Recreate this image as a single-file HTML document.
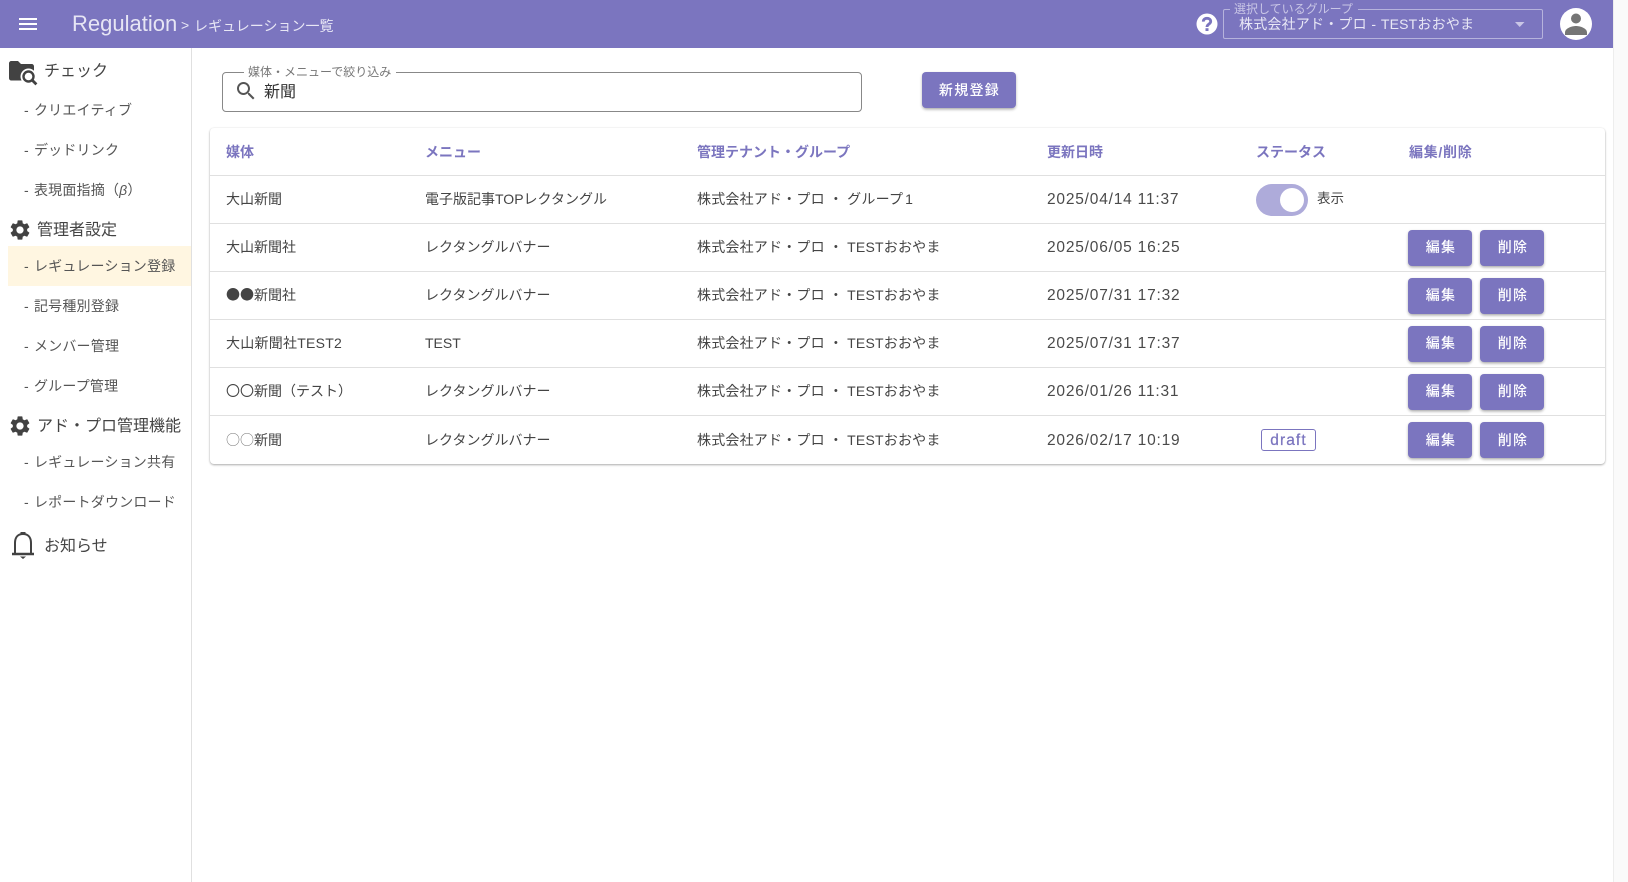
<!DOCTYPE html>
<html lang="ja">
<head>
<meta charset="utf-8">
<title>Regulation</title>
<style>
*{box-sizing:border-box}
html,body{margin:0;padding:0;width:1628px;height:882px;overflow:hidden;background:#fff}
body{position:relative;font-family:"Liberation Sans","Noto Sans CJK JP",sans-serif;color:#444;font-size:14px;text-spacing-trim:space-all}
.t{position:absolute;white-space:nowrap;line-height:20px;height:20px}
.abs{position:absolute}
svg{position:absolute;display:block}
#hdr{position:absolute;left:0;top:0;width:1613px;height:48px;background:#7b75bf}
#scroll{position:absolute;left:1613px;top:0;width:15px;height:882px;background:#fafafa;border-left:1px solid #ededed}
#side{position:absolute;left:191px;top:48px;width:1px;height:834px;background:#e0e0e0}
#hl{position:absolute;left:8px;top:246px;width:183px;height:40px;background:#fff6e1}
.h{font-size:16px;color:#444}
.s{font-size:14px;color:#555;letter-spacing:.2px;word-spacing:1px}
#card{position:absolute;left:210px;top:128px;width:1395px;height:336px;background:#fff;border-radius:4px;box-shadow:0 1px 2px rgba(0,0,0,.32),0 0 2px rgba(0,0,0,.05)}
.ln{position:absolute;left:210px;width:1395px;height:1px;background:#e0e0e0}
.th{font-size:14px;font-weight:bold;color:#7b75bf}
.td{font-size:14px;color:#444}
.g{letter-spacing:.2px}
.d{font-size:15.500px;letter-spacing:.8px;color:#4a4a4a}
.c{font-family:"Noto Sans CJK JP",sans-serif}
.btn{position:absolute;width:64px;height:36px;background:#7b75bf;color:#fff;border-radius:4px;text-align:center;line-height:35px;text-indent:2px;font-size:14px;font-weight:500;letter-spacing:1.3px;box-shadow:0 2px 3px -1px rgba(0,0,0,.3),0 1px 3px rgba(0,0,0,.14)}
</style>
</head>
<body>
<div id="hdr"></div>
<div id="scroll"></div>
<div id="side"></div>
<div id="hl"></div>

<svg style="left:16px;top:12px" width="24" height="24" viewBox="0 0 24 24"><path fill="#fff" d="M3 18h18v-2H3v2zm0-5h18v-2H3v2zm0-7v2h18V6H3z"/></svg>
<div class="t" style="left:72px;top:12px;height:24px;line-height:24px;font-size:22px;color:#e6e5f4">Regulation</div>
<div class="t" style="left:181px;top:15px;color:#e8e7f5;font-size:14px">&gt;</div>
<div class="t" style="left:194px;top:16px;color:#e8e7f5;font-size:14px">レギュレーション一覧</div>

<svg style="left:1196px;top:13px" width="22" height="22" viewBox="0 0 22 22"><circle cx="11" cy="11" r="10.500" fill="#fff"/><path fill="none" stroke="#7b75bf" stroke-width="2.800" d="M7.300 8.600C7.300 6.400 9 5.300 11 5.300s3.700 1.200 3.700 3.100c0 2.800-3.700 2.700-3.700 5.600"/><rect x="9.500" y="15.200" width="3" height="2.800" fill="#7b75bf"/></svg>
<div class="abs" style="left:1223px;top:9px;width:320px;height:30px;border:1px solid rgba(255,255,255,.45);border-radius:2px"></div>
<div class="abs" style="left:1230px;top:5px;width:128px;height:8px;background:#7b75bf"></div>
<div class="t" style="left:1234px;top:-1px;font-size:12px;color:#c9c6e6;line-height:20px">選択しているグループ</div>
<div class="t" style="left:1239px;top:14px;font-size:14px;color:#e8e7f5;letter-spacing:.2px;word-spacing:.5px">株式会社アド・プロ - TESTおおやま</div>
<svg style="left:1514px;top:22px" width="12" height="5" viewBox="0 0 12 5"><path fill="#c9c6e6" d="M1 0h9.500L5.700 5z"/></svg>
<svg style="left:1560px;top:8px" width="32" height="32" viewBox="0 0 32 32"><circle cx="16" cy="16" r="16" fill="#fff"/><circle cx="16" cy="10.500" r="5" fill="#757575"/><path fill="#757575" d="M5 24.500c0-4.300 7-6.500 11-6.500s11 2.200 11 6.500V27H5z"/></svg>

<!-- sidebar -->
<svg style="left:9px;top:60px" width="30" height="26" viewBox="0 0 30 26"><path fill="#424242" d="M0 3.500C0 2 1 1 2.500 1H9l3 3h10.500C24 4 25 5 25 6.500V18c0 1.500-1 2.500-2.500 2.500H2.500C1 20.500 0 19.500 0 18z"/><circle cx="19.500" cy="16.500" r="8" fill="#fff"/><circle cx="19.500" cy="16.500" r="5" fill="none" stroke="#424242" stroke-width="2.400"/><path stroke="#424242" stroke-width="2.800" d="M23 20L27.400 24.400"/></svg>
<div class="t h" style="left:44px;top:62px">チェック</div>
<div class="t s" style="left:24px;top:100px">- クリエイティブ</div>
<div class="t s" style="left:24px;top:140px">- デッドリンク</div>
<div class="t s" style="left:24px;top:180px">- 表現面指摘（<i>β</i>）</div>
<svg style="left:8px;top:218px" width="24" height="24" viewBox="0 0 24 24"><path fill="#424242" d="M19.140 12.940c.04-.3.06-.61.06-.94 0-.32-.02-.64-.07-.94l2.030-1.580c.18-.14.23-.41.12-.61l-1.920-3.320c-.12-.22-.37-.29-.59-.22l-2.390.96c-.5-.38-1.030-.7-1.620-.94l-.36-2.540c-.04-.24-.24-.41-.48-.41h-3.840c-.24 0-.43.17-.47.41l-.36 2.540c-.59.24-1.130.57-1.620.94l-2.390-.96c-.22-.08-.47 0-.59.22L2.740 8.870c-.12.21-.08.47.12.61l2.030 1.580c-.05.3-.09.63-.09.94s.02.64.07.94l-2.030 1.580c-.18.14-.23.41-.12.61l1.920 3.320c.12.22.37.29.59.22l2.390-.96c.5.38 1.030.7 1.620.94l.36 2.540c.05.24.24.41.48.41h3.840c.24 0 .44-.17.47-.41l.36-2.540c.59-.24 1.130-.56 1.620-.94l2.390.96c.22.08.47 0 .59-.22l1.920-3.320c.12-.22.07-.47-.12-.61l-2.010-1.580zM12 15.600c-1.980 0-3.600-1.620-3.600-3.600s1.620-3.600 3.600-3.600 3.600 1.620 3.600 3.600-1.620 3.600-3.600 3.600z"/></svg>
<div class="t h" style="left:37px;top:221px">管理者設定</div>
<div class="t s" style="left:24px;top:256px">- レギュレーション登録</div>
<div class="t s" style="left:24px;top:296px">- 記号種別登録</div>
<div class="t s" style="left:24px;top:336px">- メンバー管理</div>
<div class="t s" style="left:24px;top:376px">- グループ管理</div>
<svg style="left:8px;top:414px" width="24" height="24" viewBox="0 0 24 24"><path fill="#424242" d="M19.140 12.940c.04-.3.06-.61.06-.94 0-.32-.02-.64-.07-.94l2.030-1.580c.18-.14.23-.41.12-.61l-1.920-3.320c-.12-.22-.37-.29-.59-.22l-2.390.96c-.5-.38-1.030-.7-1.620-.94l-.36-2.540c-.04-.24-.24-.41-.48-.41h-3.840c-.24 0-.43.17-.47.41l-.36 2.540c-.59.24-1.130.57-1.620.94l-2.390-.96c-.22-.08-.47 0-.59.22L2.740 8.870c-.12.21-.08.47.12.61l2.030 1.580c-.05.3-.09.63-.09.94s.02.64.07.94l-2.030 1.580c-.18.14-.23.41-.12.61l1.920 3.320c.12.22.37.29.59.22l2.390-.96c.5.38 1.030.7 1.620.94l.36 2.540c.05.24.24.41.48.41h3.840c.24 0 .44-.17.47-.41l.36-2.540c.59-.24 1.130-.56 1.620-.94l2.390.96c.22.08.47 0 .59-.22l1.920-3.320c.12-.22.07-.47-.12-.61l-2.010-1.580zM12 15.600c-1.980 0-3.600-1.620-3.600-3.600s1.620-3.600 3.600-3.600 3.600 1.620 3.600 3.600-1.620 3.600-3.600 3.600z"/></svg>
<div class="t h" style="left:37px;top:417px">アド・プロ管理機能</div>
<div class="t s" style="left:24px;top:452px">- レギュレーション共有</div>
<div class="t s" style="left:24px;top:492px">- レポートダウンロード</div>
<svg style="left:11px;top:530px" width="24" height="29" viewBox="0 0 24 29"><path fill="none" stroke="#424242" stroke-width="2" d="M4 23V13C4 7 7 4 12 4s8 3 8 9v10"/><path stroke="#424242" stroke-width="2.400" d="M1 24h22"/><path fill="#424242" d="M9.500 2h5v2.500h-5zM9 26.500h6L12 29z"/></svg>
<div class="t h" style="left:44px;top:534px;margin-top:3px">お知らせ</div>

<!-- search -->
<div class="abs" style="left:222px;top:72px;width:640px;height:40px;border:1px solid #888;border-radius:4px"></div>
<div class="abs" style="left:244px;top:68px;width:152px;height:8px;background:#fff"></div>
<div class="t" style="left:248px;top:62px;font-size:12px;color:#777">媒体・メニューで絞り込み</div>
<svg style="left:234px;top:79px" width="24" height="24" viewBox="0 0 24 24"><path fill="#555" d="M15.500 14h-.79l-.28-.27C15.410 12.590 16 11.110 16 9.500 16 5.910 13.090 3 9.500 3S3 5.910 3 9.500 5.910 16 9.500 16c1.610 0 3.090-.59 4.230-1.570l.27.28v.79l5 4.990L20.490 19l-4.990-5zm-6 0C7.010 14 5 11.990 5 9.500S7.010 5 9.500 5 14 7.010 14 9.500 11.990 14 9.500 14z"/></svg>
<div class="t" style="left:264px;top:83px;font-size:16px;color:#333">新聞</div>
<div class="btn" style="left:922px;top:72px;width:94px;height:36px;line-height:37px;text-indent:1px">新規登録</div>

<!-- table -->
<div id="card"></div>
<div class="ln" style="top:175px"></div>
<div class="ln" style="top:223px"></div>
<div class="ln" style="top:271px"></div>
<div class="ln" style="top:319px"></div>
<div class="ln" style="top:367px"></div>
<div class="ln" style="top:415px"></div>

<div class="t th" style="left:226px;top:142px">媒体</div>
<div class="t th" style="left:425px;top:142px">メニュー</div>
<div class="t th" style="left:697px;top:142px">管理テナント・グループ</div>
<div class="t th" style="left:1047px;top:142px">更新日時</div>
<div class="t th" style="left:1256px;top:142px">ステータス</div>
<div class="t th" style="left:1409px;top:142px;letter-spacing:.7px">編集/削除</div>

<div class="t td" style="left:226px;top:189px">大山新聞</div>
<div class="t td" style="left:425px;top:189px">電子版記事TOPレクタングル</div>
<div class="t td g" style="left:697px;top:189px">株式会社アド・プロ ・ グループ<span style="margin-left:2px">1</span></div>
<div class="t td d" style="left:1047px;top:190px">2025/04/14 11:37</div>
<div class="abs" style="left:1256px;top:184px;width:52px;height:32px;border-radius:16px;background:#aeabda"></div>
<div class="abs" style="left:1280px;top:188px;width:24px;height:24px;border-radius:50%;background:#fff"></div>
<div class="t td" style="left:1317px;top:189px;font-size:13.500px;letter-spacing:0">表示</div>

<div class="t td" style="left:226px;top:237px">大山新聞社</div>
<div class="t td" style="left:425px;top:237px">レクタングルバナー</div>
<div class="t td g" style="left:697px;top:237px">株式会社アド・プロ ・ TESTおおやま</div>
<div class="t td d" style="left:1047px;top:238px">2025/06/05 16:25</div>
<div class="btn" style="left:1408px;top:230px">編集</div><div class="btn" style="left:1480px;top:230px">削除</div>

<div class="t td c" style="left:226px;top:285px">●●新聞社</div>
<div class="t td" style="left:425px;top:285px">レクタングルバナー</div>
<div class="t td g" style="left:697px;top:285px">株式会社アド・プロ ・ TESTおおやま</div>
<div class="t td d" style="left:1047px;top:286px">2025/07/31 17:32</div>
<div class="btn" style="left:1408px;top:278px">編集</div><div class="btn" style="left:1480px;top:278px">削除</div>

<div class="t td" style="left:226px;top:333px;letter-spacing:.25px">大山新聞社TEST2</div>
<div class="t td" style="left:425px;top:333px">TEST</div>
<div class="t td g" style="left:697px;top:333px">株式会社アド・プロ ・ TESTおおやま</div>
<div class="t td d" style="left:1047px;top:334px">2025/07/31 17:37</div>
<div class="btn" style="left:1408px;top:326px">編集</div><div class="btn" style="left:1480px;top:326px">削除</div>

<div class="t td" style="left:226px;top:381px">〇〇新聞（テスト）</div>
<div class="t td" style="left:425px;top:381px">レクタングルバナー</div>
<div class="t td g" style="left:697px;top:381px">株式会社アド・プロ ・ TESTおおやま</div>
<div class="t td d" style="left:1047px;top:382px">2026/01/26 11:31</div>
<div class="btn" style="left:1408px;top:374px">編集</div><div class="btn" style="left:1480px;top:374px">削除</div>

<div class="t td c" style="left:226px;top:430px"><span style="color:#777">○○</span>新聞</div>
<div class="t td" style="left:425px;top:430px">レクタングルバナー</div>
<div class="t td g" style="left:697px;top:430px">株式会社アド・プロ ・ TESTおおやま</div>
<div class="t td d" style="left:1047px;top:431px">2026/02/17 10:19</div>
<div class="abs" style="left:1261px;top:429px;width:55px;height:22px;border:1px solid #7b75bf;border-radius:3px;color:#7b75bf;font-size:15.500px;line-height:21px;text-align:center;letter-spacing:1.100px;-webkit-text-stroke:.25px #7b75bf">draft</div>
<div class="btn" style="left:1408px;top:422px;line-height:36px">編集</div><div class="btn" style="left:1480px;top:422px;line-height:36px">削除</div>
</body>
</html>
